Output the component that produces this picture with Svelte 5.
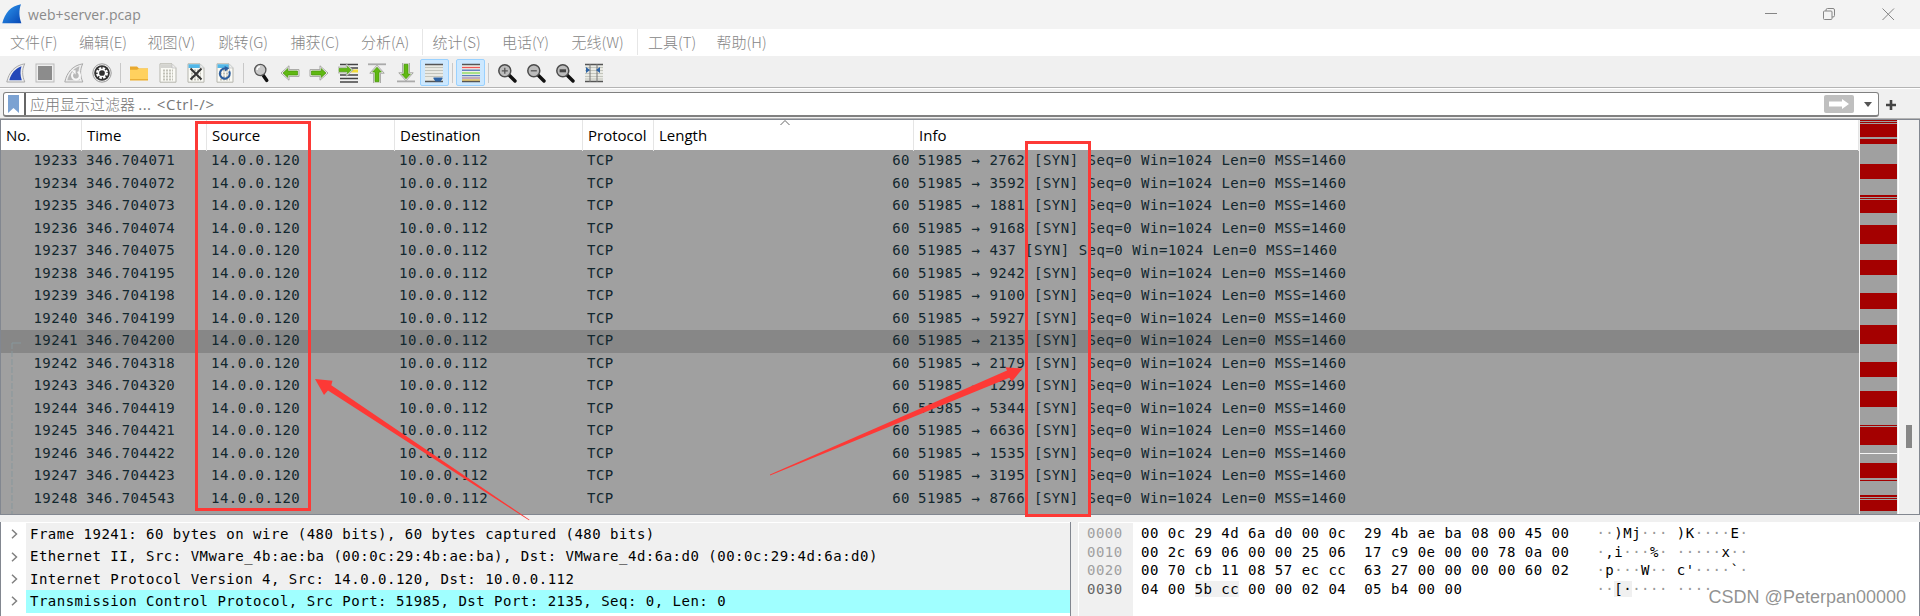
<script>
  const menus = [
    ['文件(F)', 69], ['编辑(E)', 68.5], ['视图(V)', 71], ['跳转(G)', 72], ['捕获(C)', 70.5], ['分析(A)', 71.5],
    ['统计(S)', 69.5], ['电话(Y)', 69.5], ['无线(W)', 76.5], ['工具(T)', 68.5], ['帮助(H)', 70]
  ];
  const tools = ['start', 'stop', 'restart', 'options', '|', 'open', 'save', 'close', 'reload', '|', 'find', 'back', 'forward', 'goto', 'first', 'last', 'autoscroll', '|', 'colorize', '|', 'zoomin', 'zoomout', 'zoomreset', 'resize'];
  const packets = [
    [19233, '346.704071', 2762], [19234, '346.704072', 3592], [19235, '346.704073', 1881], [19236, '346.704074', 9168],
    [19237, '346.704075', 437], [19238, '346.704195', 9242], [19239, '346.704198', 9100], [19240, '346.704199', 5927],
    [19241, '346.704200', 2135], [19242, '346.704318', 2179], [19243, '346.704320', 1299], [19244, '346.704419', 5344],
    [19245, '346.704421', 6636], [19246, '346.704422', 1535], [19247, '346.704423', 3195], [19248, '346.704543', 8766]
  ];
  const marks = [
    [0, 1], [2, 1], [4, 13], [19, 5], [44, 15], [75, 2], [78, 1], [80, 13], [105, 19], [140, 15], [173, 16],
    [205, 19], [242, 15], [271, 16], [305, 1], [307, 18], [343, 15], [360, 1], [375, 2], [378, 1], [380, 11]
  ];
  const details = [
    'Frame 19241: 60 bytes on wire (480 bits), 60 bytes captured (480 bits)',
    'Ethernet II, Src: VMware_4b:ae:ba (00:0c:29:4b:ae:ba), Dst: VMware_4d:6a:d0 (00:0c:29:4d:6a:d0)',
    'Internet Protocol Version 4, Src: 14.0.0.120, Dst: 10.0.0.112',
    'Transmission Control Protocol, Src Port: 51985, Dst Port: 2135, Seq: 0, Len: 0'
  ];
  const bytes = [
    ['0000', '00 0c 29 4d 6a d0 00 0c  29 4b ae ba 08 00 45 00', '··)Mj··· )K····E·'],
    ['0010', '00 2c 69 06 00 00 25 06  17 c9 0e 00 00 78 0a 00', "·,i···%· ·····x··"],
    ['0020', '00 70 cb 11 08 57 ec cc  63 27 00 00 00 00 60 02', "·p···W·· c'····`·"],
    ['0030', '04 00 5b cc 00 00 02 04  05 b4 00 00            ', '··[····· ····']
  ];
</script>

{#snippet greenArrow(rotation)}
  <g transform="rotate({rotation} 10 10)">
    <path d="M1 10 9 2.8V6.6h10v6.8H9v3.8Z" fill="#f4f4f0" stroke="#a5a5a2" />
    <path d="M3 10 7.8 5.6V8h9.7v4H7.8v2.4Z" fill="#60b812" stroke="#449307" stroke-width=".7" />
  </g>
{/snippet}

{#snippet lens(sign)}
  <path d="M12.5 12.5 18 18" stroke="#111" stroke-width="3.4" stroke-linecap="round" />
  <circle cx="7.8" cy="7.8" r="6" fill="#bcbcbc" stroke="#4b4b4b" stroke-width="1.5" />
  {#if sign === '+'}<path d="M4.8 7.8h6M7.8 4.8v6" stroke="#555" stroke-width="1.3" />{/if}
  {#if sign === '-'}<path d="M4.8 7.8h6" stroke="#555" stroke-width="1.3" />{/if}
  {#if sign === '='}<rect x="4.6" y="6.3" width="6.4" height="3" fill="#444" />{/if}
{/snippet}

{#snippet sheet(tint)}
  <path d="M2 .8h12l4 4v14.4H2Z" fill="#fafaf5" stroke="#b5b5ad" />
  <path d="M2.5 1.3h11.3l3.7 3.7H2.5Z" fill={tint} />
  <path d="M14 1v4h4" fill="#eee" stroke="#bbb" stroke-width=".7" />
  <path d="M5 7.5h10M5 10.5h10M5 13.5h10M5 16.5h10" stroke="#c2c2b8" stroke-width="1.8" stroke-dasharray="2 1" />
{/snippet}

{#snippet icon(name)}
  <svg width="20" height="20" viewBox="0 0 20 20" fill="none">
    {#if name === 'start' || name === 'restart'}
      <path d="M.8 19C2.8 9.5 8.5 2.5 18.8.8 15.8 6.5 16 12.5 18.8 19Z" fill="#eee" stroke="#aaa" />
      <path d="M3.3 17.2C5.2 10.5 9 5.5 15.5 3.2c-1.5 4.8-1.2 9.3.3 14Z" fill={name === 'start' ? '#2448b8' : '#b9b9b9'} />
      {#if name === 'restart'}
        <path d="M13.6 8.9a4 4 0 1 1-4.4.8" stroke="#f8f8f8" stroke-width="2" />
        <path d="M7.3 7.3h4.3v4.1Z" fill="#f8f8f8" />
      {/if}
    {:else if name === 'stop'}
      <rect x="1" y="1" width="18" height="18" fill="#eee" stroke="#bbb" />
      <rect x="3" y="3" width="14" height="14" fill="#8c8c8c" />
    {:else if name === 'options'}
      <circle cx="10" cy="10" r="9.2" fill="#f5f5f5" stroke="#999" />
      <circle cx="10" cy="10" r="7.8" fill="#303030" />
      <circle cx="10" cy="10" r="4.9" stroke="#fff" stroke-width="2.2" stroke-dasharray="2.5 1.35" />
      <circle cx="10" cy="10" r="3.6" stroke="#fff" stroke-width="1.5" />
      <circle cx="10" cy="10" r="1.3" fill="#303030" />
    {:else if name === 'open'}
      <path d="M1 3.5h7l2 2h9v11.7H1Z" fill="#e9a92e" />
      <path d="M1 6.8h7l2-1.3h9v11.7H1Z" fill="#ffd15e" />
      <path d="M1 16.7h18" stroke="#e5a72e" />
    {:else if name === 'save'}
      {@render sheet('#d4d4d0')}
    {:else if name === 'close'}
      {@render sheet('#52b7e8')}
      <path d="m4.5 5.5 11 11m0-11-11 11" stroke="#333" stroke-width="2" />
    {:else if name === 'reload'}
      {@render sheet('#52b7e8')}
      <path d="M14.2 8.2a5 5 0 1 1-3.3-2.5" stroke="#2c5d9e" stroke-width="2.1" />
      <path d="m9.6 3 4.8 2.2-4.3 3.2Z" fill="#2c5d9e" />
    {:else if name === 'find'}
      <path d="m11 12 3.8 5.4" stroke="#111" stroke-width="3.4" stroke-linecap="round" />
      <circle cx="8.3" cy="7" r="5.6" fill="#c9c9c9" stroke="#555" stroke-width="1.3" />
      <path d="M5 7a3.3 3.3 0 0 1 3-3.3" stroke="#fff" stroke-width="1.3" />
    {:else if name === 'back'}
      {@render greenArrow(0)}
    {:else if name === 'forward'}
      {@render greenArrow(180)}
    {:else if name === 'goto'}
      <path d="M2 1.5h18M12 5h8M2 12h18M2 15.5h18M2 19h18" stroke="#444" stroke-width="1.3" />
      <path d="M13 8h7" stroke="#f3dc3a" stroke-width="3" />
      <g transform="translate(-1 -1.5) scale(.85)">{@render greenArrow(180)}</g>
    {:else if name === 'first'}
      <path d="M1 1.3h18" stroke="#aaa" stroke-width="1.8" />
      <g transform="translate(0 1.2)">{@render greenArrow(90)}</g>
    {:else if name === 'last'}
      <path d="M1 18.4h18" stroke="#aaa" stroke-width="1.8" />
      <g transform="translate(0 -1.2)">{@render greenArrow(270)}</g>
    {:else if name === 'autoscroll'}
      <path d="M1 1h18v18H1Z" fill="#e9eae4" />
      <path d="M1 4.5h18M1 7.5h18M1 10.5h18M1 13.5h18" stroke="#c3c5bd" />
      <path d="M1 1.5h18M1 18.5h18" stroke="#555" stroke-width="1.3" />
      <path d="M9.5 14.5h9v1.3l-2 2.7h-5l-2-2.7Z" fill="#2e64a5" />
    {:else if name === 'colorize'}
      <path d="M1 1h18v18H1Z" fill="#f0f0e8" />
      <path d="M1 1.5h18M1 18.5h18" stroke="#555" stroke-width="1.3" />
      <path d="M1 4.5h18" stroke="#ef5656" stroke-width="1.3" />
      <path d="M1 7.2h18" stroke="#4b70b5" stroke-width="1.3" />
      <path d="M1 10h18" stroke="#82d954" stroke-width="1.3" />
      <path d="M1 12.6h18" stroke="#5d7fbd" stroke-width="1.3" />
      <path d="M1 15h18" stroke="#a07ba5" stroke-width="1.2" />
      <path d="M1 17h18" stroke="#d3ac38" stroke-width="1.2" />
    {:else if name === 'zoomin'}
      {@render lens('+')}
    {:else if name === 'zoomout'}
      {@render lens('-')}
    {:else if name === 'zoomreset'}
      {@render lens('=')}
    {:else if name === 'resize'}
      <path d="M1 1h18v18H1Z" fill="#e9eae4" />
      <path d="M1 4.5h18M1 7.5h18M1 10.5h18M1 13.5h18M1 16h18" stroke="#c3c5bd" />
      <path d="M1 1.5h18M1 18.5h18" stroke="#555" stroke-width="1.3" />
      <path d="M6 1v18M13 1v18" stroke="#777" />
      <path d="m2 4 4 3-4 3Zm14 0-4 3 4 3Z" fill="#2e64a5" />
    {/if}
  </svg>
{/snippet}

<div class="window">
  <header class="title">
    <svg width="20" height="20" viewBox="0 0 20 20">
      <defs><linearGradient id="fin" x1="0" y1="0" x2="1" y2="1"><stop offset="0" stop-color="#2f9bf0" /><stop offset="1" stop-color="#0847b4" /></linearGradient></defs>
      <path d="M.3 19.3C3 9.2 8.5 2 19 .3c-2.3 6-2 12.700.4 19Z" fill="url(#fin)" />
    </svg>
    <span class="name">web+server.pcap</span>
    <svg class="controls" width="130" height="14" viewBox="0 0 130 14" fill="none" stroke="#858585">
      <path d="M0 6.500h12M117.500 1.500l11.500 11.500m0-11.500-11.500 11.500" />
      <rect x="58.500" y="4" width="8.500" height="8.500" rx="1" />
      <path d="M61 4V3q0-1.500 1.500-1.500H68q1.500 0 1.500 1.500v5.500q0 1.500-1.500 1.500h-1" />
    </svg>
  </header>

  <nav>
    {#each menus as [label, width], i}
      <span class:ruled={i === 5 || i === 8} style:width="{width}px">{label}</span>
    {/each}
  </nav>

  <div class="toolbar">
    {#each tools as tool}
      {#if tool === '|'}
        <i class="sep"></i>
      {:else}
        <span class="tool" class:on={tool === 'autoscroll' || tool === 'colorize'}>{@render icon(tool)}</span>
      {/if}
    {/each}
  </div>

  <div class="filter">
    <div class="field">
      <svg width="11" height="18" viewBox="0 0 11 18"><path d="M0 0h11v18l-5.500-5L0 18Z" fill="#7ba2d2" /></svg>
      <i class="rule"></i>
      <span class="hint">应用显示过滤器 <b>...</b> <em>&lt;Ctrl-/&gt;</em></span>
      <svg class="apply" width="30" height="18" viewBox="0 0 30 18"><rect width="30" height="18" rx="2" fill="#bfbfbf" /><path d="M5 6.500h13V4l7 5-7 5v-2.500H5Z" fill="#fff" /></svg>
      <svg width="8" height="5" viewBox="0 0 8 5"><path d="M0 0h8L4 5Z" fill="#555" /></svg>
    </div>
    <svg width="10" height="10" viewBox="0 0 10 10"><path d="M5 0v10M0 5h10" stroke="#444" stroke-width="2.600" /></svg>
  </div>

  <section class="packets">
    <div class="table">
      <div class="head cols">
        <span>No.</span><span>Time</span><span>Source</span><span>Destination</span><span>Protocol</span><span>Length</span><span>Info</span>
        <svg class="sort" width="10" height="6" viewBox="0 0 10 6" fill="none" stroke="#666"><path d="m.5 5 4.500-4.500L9.500 5" /></svg>
      </div>
      {#each packets as [no, time, port]}
        <div class="row cols" class:selected={no === 19241}>
          <span class="right">{no}</span><span>{time}</span><span>14.0.0.120</span><span>10.0.0.112</span><span>TCP</span><span class="right">60</span><span>51985 → {port} [SYN] Seq=0 Win=1024 Len=0 MSS=1460</span>
        </div>
      {/each}
      <svg class="stream" width="12" height="173" viewBox="0 0 12 173" fill="none" stroke="#87979c"><path d="M1 1h9" /><path d="M1 1v172" stroke-dasharray="6 2" /></svg>
    </div>
    <svg class="map" width="37" height="394" viewBox="0 0 37 394" shape-rendering="crispEdges">
      <rect width="37" height="394" fill="#a0a0a0" />
      {#each marks as [y, height]}
        <rect {y} width="37" {height} fill="#a40000" />
      {/each}
      <rect y="333" width="37" height="1" fill="#f4f4f4" />
    </svg>
    <div class="scroll"><i></i></div>
  </section>

  <section class="lower">
    <div class="details">
      {#each details as line, i}
        <div class="node">
          <svg width="7" height="10" viewBox="0 0 7 10" fill="none" stroke="#808080" stroke-width="1.500"><path d="m1 .7 4.500 4.300L1 9.300" /></svg>
          <span class:active={i === 3}>{line}</span>
        </div>
      {/each}
    </div>
    <div class="bytes">
      {#each bytes as [offset, hex, ascii], i}
        <div class="byterow">
          <span class="offset" class:current={i === 3}>{offset}</span>
          <span class="hex">{#if i === 3}{hex.slice(0, 6)}<mark>{hex.slice(6, 11)}</mark>{hex.slice(11)}{:else}{hex}{/if}</span>
          <span class="ascii">{#each ascii as ch, j}<span class:dot={ch === '·' && !(i === 3 && j === 3)} class:hit={i === 3 && (j === 2 || j === 3)}>{ch}</span>{/each}</span>
        </div>
      {/each}
      <div class="fill"></div>
    </div>
  </section>

  <svg class="notes" width="1920" height="616" viewBox="0 0 1920 616" fill="none">
    <rect x="196.500" y="122.500" width="113" height="387" stroke="#fd3936" stroke-width="3" />
    <rect x="1026.500" y="142.500" width="63" height="373" stroke="#fd3936" stroke-width="3" />
    <path d="M315 379 332.500 380.700 331.300 385.300 529.500 519.700 529 520.300 328 390.500 324 395Z" fill="#fd3936" />
    <path d="M1022.700 368.500 1005.500 367.300 1007 370.500 770 474.600V475.600L1009.300 377.700 1011.700 381.700Z" fill="#fd3936" />
  </svg>
  <div class="credit">CSDN @Peterpan00000</div>
</div>

<style>
  :global(body) { margin: 0; }
  .window { position: relative; display: flex; flex-direction: column; width: 1920px; height: 616px; overflow: hidden; background: #f0f0f0; font-family: "Open Sans", "Noto Sans CJK SC", sans-serif; }
  .window * { box-sizing: border-box; }
  svg { display: block; flex: none; }

  .title { display: flex; align-items: center; height: 29px; padding: 0 25px 1px 2px; background: #f3f3f3; }
  .name { margin-left: 6px; font-size: 14px; line-height: 20px; color: #8a8a8a; letter-spacing: .1px; padding-top: 2px; }
  .controls { margin-left: auto; }

  nav { display: flex; height: 27px; padding-left: 10px; background: #fff; font-family: "Noto Sans CJK SC", sans-serif; font-weight: 300; font-size: 15px; line-height: 25px; color: #858585; white-space: nowrap; }
  nav .ruled { background: linear-gradient(#e6e6e6, #e6e6e6) no-repeat calc(100% - 10px) 0 / 1px 26px; }

  .toolbar { display: flex; align-items: center; height: 32px; padding: 2px 0 0 1.6px; border-bottom: 1px solid #b4b4b4; }
  .tool { display: flex; align-items: center; justify-content: center; width: 28.8px; height: 27px; }
  .tool.on { border: 1px solid #99d1ff; border-radius: 2px; background: #cce8ff; }
  .sep { width: 7.6px; height: 20px; background: linear-gradient(#c8c8c8, #c8c8c8) no-repeat 3px 0 / 1px 100%; }

  .filter { display: flex; align-items: center; gap: 7px; height: 31px; padding: 3px 0 1px 3px; border-top: 1px solid #fff; border-bottom: 1px solid #b4b4b4; }
  .field { display: flex; align-items: center; width: 1876px; height: 25px; padding: 0 6px 0 4px; border: 1px solid #808080; border-bottom-width: 2px; border-radius: 3px; background: #fff; }
  .rule { width: 2px; height: 22px; margin-left: 5px; background: #666; }
  .hint { margin-left: 4px; font-family: "Noto Sans CJK SC", sans-serif; font-weight: 300; font-size: 15px; line-height: 22px; color: #777; white-space: pre; }
  .hint b, .hint em { font: 15px/22px "Open Sans", sans-serif; }
  .hint em { margin-left: 2px; letter-spacing: .75px; }
  .hint b { letter-spacing: .4px; }
  .apply { margin: 0 10px 0 auto; }

  .packets { display: flex; width: 1920px; height: 396px; border: 1px solid #828790; background: #f0f0f0; }
  .table { position: relative; width: 1858px; background: #a0a0a0; overflow: hidden; }
  .cols { display: grid; grid-template-columns: 81px 125px 188px 188px 71px 260px 1fr; white-space: pre; }
  .head { position: relative; height: 30px; background: #fff; font-size: 15px; line-height: 31px; color: #000; }
  .head > span { padding-left: 5px; border-right: 1px solid #e5e5e5; }
  .sort { position: absolute; left: 779px; top: 0; }
  .row, .details, .bytes { font-family: "DejaVu Sans Mono", monospace; font-size: 14px; letter-spacing: .496px; }
  .row { height: 22.5px; line-height: 21px; color: #12272e; }
  .row > span { padding-left: 4px; }
  .row .right { padding: 0 4px 0 0; text-align: right; }
  .row.selected { background: #878787; }
  .stream { position: absolute; left: 10px; top: 222px; }
  .map { margin-left: 1px; }
  .scroll { flex: 1; margin-left: 1px; padding: 305px 0 0 7px; border-left: 1px solid #fff; }
  .scroll i { display: block; width: 6px; height: 23px; background: #868686; }

  .lower { display: flex; gap: 7px; height: 101px; padding-top: 7px; }
  .details { width: 1071px; border: solid #828790; border-width: 0 1px; padding-top: 1px; background: #fff; color: #000; }
  .node { display: flex; align-items: center; height: 22.4px; padding-left: 10px; }
  .node span { flex: 1; height: 22.4px; margin-left: 8px; padding-left: 4px; background: #f0f0f0; line-height: 22px; white-space: pre; }
  .node span.active { background: #a0ffff; }
  .bytes { display: flex; flex-direction: column; flex: 1; padding: 1px 0 0 1px; border-right: 1px solid #828790; background: #fff; color: #000; }
  .byterow { display: flex; height: 18.7px; line-height: 20px; white-space: pre; }
  .offset { width: 54px; padding-left: 8px; background: #f0f0f0; color: #a0a0a0; }
  .offset.current { color: #666; }
  .hex { margin-left: 8px; }
  .ascii { margin-left: 27px; }
  mark, .hit { background: #f0f0f0; color: inherit; }
  .dot { color: #999; }
  .fill { width: 54px; flex: 1; background: #f0f0f0; }

  .notes { position: absolute; left: 0; top: 0; }
  .credit { position: absolute; right: 14px; bottom: 7px; font: 18px/24px "Liberation Sans", sans-serif; color: rgba(110, 110, 110, .75); white-space: nowrap; }
</style>
